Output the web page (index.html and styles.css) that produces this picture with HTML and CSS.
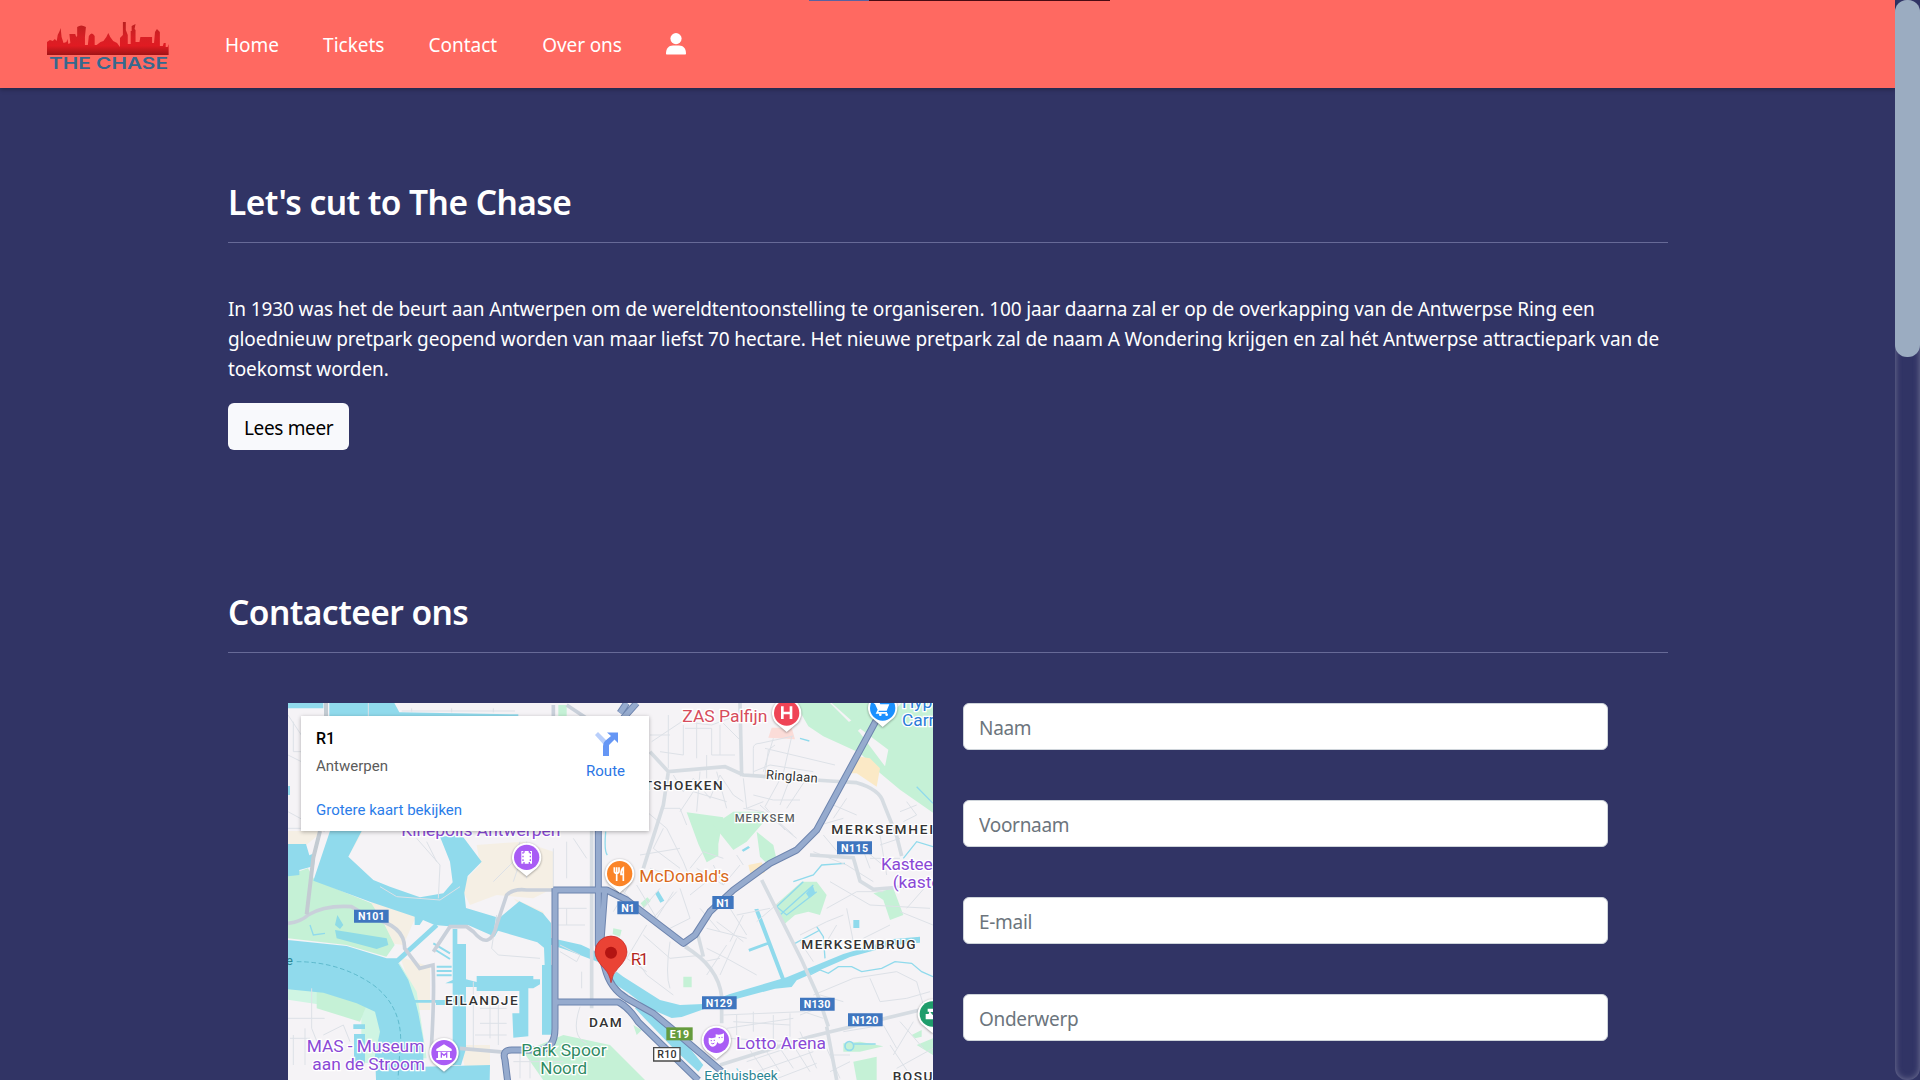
FILE: index.html
```html
<!DOCTYPE html>
<html lang="nl">
<head>
<meta charset="utf-8">
<title>The Chase</title>
<link rel="stylesheet" href="styles.css">
</head>
<body>
<header class="navbar">
  <a class="brand" aria-label="The Chase">
    <svg class="logo" viewBox="0 0 122 50" width="122" height="50">
      <defs><linearGradient id="sky" x1="0" y1="0" x2="0" y2="1"><stop offset="0" stop-color="#b9201f"/><stop offset=".45" stop-color="#d81f25"/><stop offset=".72" stop-color="#e01b22"/><stop offset="1" stop-color="#a01316"/></linearGradient></defs>
      <path transform="scale(.973 1)" fill="url(#sky)" d="M0 34V21l3-2 3 1 2-2 2 2 1-6 2-4 1-3 1 9 2 6 3-1 1-3 1 5 2-1-1-9h6l1 3 1-1V6q4-3 9 0l-1 10v8h3l1-9q3-5 6 0v9h2l4-3 3-1 3-4 2-4 2 4 3 4 4 2 3 4v-9l3-3V1h3v8l2 5v9h3V10h1V5l4-2-1 5 1 1v12h4l1-5h12v6h2l1-11 2-3 3 3v14h3l1-3h2v4h2l1-3V34z"/>
      <text class="logo-text" x="2" y="48" textLength="119" lengthAdjust="spacingAndGlyphs">THE CHASE</text>
    </svg>
  </a>
  <nav class="nav-links">
    <a>Home</a><a>Tickets</a><a>Contact</a><a class="about">Over ons</a>
    <a class="user" aria-label="Account"><svg viewBox="0 0 20 22" width="20" height="22"><ellipse cx="10" cy="5.600" rx="5.600" ry="5.600" fill="#fff"/><path fill="#fff" d="M1 21.500c-.6 0-1-.4-1-1 0-5 2.500-8 7-8h6c4.500 0 7 3 7 8 0 .6-.4 1-1 1z"/></svg></a>
  </nav>
  <div class="loader"><div class="loader-bar"></div></div>
</header>
<main class="container">
  <section class="intro">
    <h2>Let's cut to The Chase</h2>
    <hr>
    <p>In 1930 was het de beurt aan Antwerpen om de wereldtentoonstelling te organiseren. 100 jaar daarna zal er op de overkapping van de Antwerpse Ring een<br>gloednieuw pretpark geopend worden van maar liefst 70 hectare. Het nieuwe pretpark zal de naam A Wondering krijgen en zal hét Antwerpse attractiepark van de<br>toekomst worden.</p>
    <a class="btn">Lees meer</a>
  </section>
  <section class="contact">
    <h2>Contacteer ons</h2>
    <hr>
    <div class="row">
      <div class="map">
        <svg viewBox="24 24 1935 1131" width="645" height="377">
          <rect x="24" y="24" width="1935" height="1131" fill="#f5f3f6"/>
          <!-- built-up and industrial areas -->
          <g fill="#f5efe4">
            <path d="M24 408h105l-60 50-45-10zM245 408l-40 77 40-70zM590 450l140-10 90 30v110l-60 30-110-10-80 30-30-60 60-60z"/>
            <path d="M270 615l140 45-40 90-40-5zM360 785l90 30 0 130-35 0-30-90zM540 1050h90v70h-75zM700 610l90 40 10 30-80-50z"/>
          </g>
          <!-- parks -->
          <g fill="#c5f1d6">
            <path d="M24 540l60-20 20 35 170 70 35 55 35 70-25 35-120-35-175-20z"/>
            <path d="M24 863l100 6 105 35 55 30 20 70-15 100-35 0-10-80 0-60-90-30-134-20z" fill="#cff5e3"/>
            <path d="M110 880l150 50-20 50-130-40z"/>
            <path d="M350 790l60 100 30 200-15 0-20-150z" fill="#cff5e3"/>
            <path d="M835 30h25v33h-25z"/>
            <path d="M1545 24h105l90 90 75 100 10-50-80-60-90-80h120l60 30 30-30h95v330l-100-70-60-50-60-60-110-50-45-30z"/>
            <path d="M1700 85l50-30 10 30-35 30z"/>
            <path d="M1220 352l110 15-15 80 0 35-35 20-25-55z"/>
            <path d="M1300 390l60-40 90 0 20 10-70 80-40 25zM1430 410l50 40 10 45-20 20-30-30z"/>
            <path d="M1480 635l85-75 45 0 30 40-20 60-35-10-40 10-35 30zM1780 595l60-15 30 80-40 15-20-60z"/>
            <path d="M1082 625l20-18 10 10-20 22zM1000 700l25 5-5 20-22-8zM1210 845h25v32h-25z"/>
            <path d="M730 1070l120-50 140 30 60 60 60 60H800z"/>
            <path d="M1690 1045l50-5 70 14-70 16-50 0zM1720 1100l70-15v70h-60zM1895 1020l30-15v20l-20 5zM1910 1050l49-20v50z"/>
            <path d="M1060 990l25 15-15 15z"/>
          </g>
          <path d="M1465 128l10-30h60l10 35z" fill="#fbdcd8"/>
          <path d="M1710 235l30-50 30 5 30 30-10 55-30-20-30-20zM1405 510l40-8 10 30-40 20z" fill="#fbe9c6"/>
          <!-- river, docks and canals -->
          <g fill="#90daec">
            <path d="M24 24h106v16H24zM148 24h195l15 28 357 6v12H148z"/>
            <path d="M24 447h54l10 34 18-8-4 40-44 12v15l-34 4zM24 273h6v27h-6z"/>
            <path d="M150 408h95l-40 77 75 70 50 20 90 32 70-12 28-33-8-62-30-75 65-5 60 80-42 43-10 50 5 46 100 30 60-50 70 35 25 30v45l90 20 85 40v25l-130-50-45-15v60l7 3v207h-34V810h8l-2-52-20-16-118-35-10 18-80-35-40 5-60-5-35-15-10 15-15 0v-25L270 620l-170-63z"/>
            <path d="M24 735l176 18 120 37 30 0 115-105 10 10-120 110 30 50 20 60 10 40 15 80 0 80 200-5-2 90H290l-5-120 15-70-15-60-55-25-100-32-106-10z"/>
            <path d="M165 705l155 25 5 20-35 12-120-32zM172 660l18 30-10 12-15-12z" fill="#8fdbe6"/>
            <path d="M518 702h14v45h26v106l32 8v-18h170v10l20 0v15l-20 12h-15v144l-45 4-3-73h21v-67H590v-12l-32 0v185l-15 50h-25V930h-50v-12h50V865h-22l22-10z"/>
            <path d="M405 915h110v8H405zM220 988h35v14h-35zM222 1017h33v100h-33z"/>
            <path d="M1010 830l20 15 110 70 60 15 70-3 80-30 170-50 170-70 150-45 80-7v18l-80 8-130 35-160 70-15 20-50 5-150 40-60 20-70 25-30 3-70-30-60-45-60-40z"/>
            <path d="M1065 940l25-20 100 90 80 100-15 20-70-65z"/>
            <path d="M1423 643l12-2 80 210-12 2zM1405 762l60-22 3 8-60 22zM1720 675l18 0v24h-18zM1385 465l20-12 5 5-20 12zM1578 595l20-25 8 25-18 15zM1125 595l10-8 18 30-12 6z"/>
          </g>
          <g fill="none" stroke="#90daec" stroke-width="6">
            <path d="M460 745l50 30M462 762l48 30M470 815h45M470 828h45M470 841h45"/>
            <path d="M1590 840l30-15 25 10 30-20h40l30 15 60-10 40-20 50 5 30 25 34 15" stroke-width="4"/>
            <path d="M1490 635l80-75M1500 660l100-90M1490 635l30 25 90-70M1610 695l20 30 5 65M1545 745l75-40" stroke-width="4"/>
            <path d="M1540 560l60-20 25-30 70-5M1870 490l40-50 49 15M1910 275l49 50M1560 130l28 8M90 690l10 30 35-5M977 410q-5 60 5 70" stroke-width="4"/>
            <circle cx="1708" cy="1053" r="13" stroke-width="5"/><path d="M1722 1047h65M1370 1120l30 40" stroke-width="4"/>
          </g>
          <path d="M50 800q130 0 230 70 80 60 82 160l-8 120" fill="none" stroke="#46a9bd" stroke-width="2" stroke-dasharray="14 8"/>
          <!-- local streets -->
          <g fill="none" stroke="#dde1e7" stroke-width="3">
            <path d="M24 60l40 60M40 80v90h24M24 180l40 20M24 350l110 60M24 400h38M265 24v40M365 48h340M395 40v10M515 40v12M640 40v12"/>
            <path d="M410 430l70 80-5 100M440 440l30 60M700 560l20-60M820 580V460M860 440v110M740 440v110M640 560l60-60 20-60M880 430l40 60M300 575l50 30 130 10 60-40"/>
            <path d="M830 640h90M835 690h80M860 640v50M840 770l50 30 10-20-60-30M580 860v200M630 900v130M655 900v150M600 940h80M600 985h80M585 1020h95M650 660l-15 100 20 20 125 10"/>
            <path d="M30 1030h60M40 1020v90M75 1000v110M95 880v120l20 50M130 1020l60-30 20 50M24 970h110M900 935q-30 90 20 110M905 830v50M700 1100h150M720 1070v80M750 1090v60M780 1080v50"/>
            <path d="M1115 140l90-60 90 10 80-30M1140 170l70 10v-90M1165 60v160M1215 100h80v80h70M1250 80v110M1280 180v70M1320 90v90M1110 120h60M1325 80l60 60"/>
            <path d="M1180 240l30 50 30-40 50 60 30-70 40 60 30 20M1260 230l-10 120M1310 230l30 110M1390 250l10 90 50-20M1200 350l40-60 100 30M1150 340l50 0 20 50"/>
            <path d="M1420 240l0-80q0-15 20-15l100-22M1420 230l50-20 130 20M1455 240l10-75 20-15M1455 160l210 50M1535 125l-25 110-55 100 60 70M1420 300l60 15 80 0M1390 340l60 10 100 80M1440 330l100 90M1530 250l-30 80M1580 250l-60 90M1480 130l-30 100"/>
            <path d="M1100 350l60 50 50 100 20 50M1150 400l-30 60 80 60M1080 480l120-20M1110 520l90 30M1230 520l40-50 60 20M1250 520l80 50 50-60M1300 510l30 60M1600 470l100 40 80 50M1370 480l20 30"/>
            <path d="M1620 390l70-20M1630 420l50 60M1740 440l30 80M1800 420l20 120M1770 490h90M1800 450l60-20M1760 470l60 50M1700 310l-40 60M1660 330l70 30M1860 350l50-20M1870 380l40-20-30-40"/>
            <path d="M1070 570l60 100 50-80M1020 580l60 60M1080 650l60-70M1110 680l80-90M1200 580l30 90-60 30M1230 600l50-40M1260 640l60 70M1300 650l-60 70M1170 740q-15 100 0 140M1090 720l80 70 100-10M1100 690l-60 100 60 40"/>
            <path d="M1210 740l60 60 50-10M1280 700l120 30M1310 680l80 60M1350 640l50 80M1370 660l100-20M1280 760l60 30 90 50M1340 750l-60 90M1370 730l-50 110M1390 660l-40 80M1430 680l70-60"/>
            <path d="M1000 650l60-100M1060 780l40 60 80 60M1650 560l120 70 180 10M1640 640l90-50 80 0M1640 740l30-50M1700 640l20 100M1560 720l80-40 50-20M1600 800l-40-60M1750 730l80-40M1860 650l99 40M1880 640l70-80"/>
            <path d="M1600 900l120-50 130-20 60 30 20 70M1770 850l30 70M1800 920l80-10 70-20M1620 900l70 20M1560 960l80-30M1330 960l240-10 60 20M1340 1000l200-30M1370 960v60M1420 950v60M1480 960v70M1530 955v70M1360 980l170 10M1340 1030l190 10"/>
            <path d="M1400 1050l60 90M1440 1040l60 90M1480 1030l60 90M1520 1020l70 110M1560 1010l50 110M1400 1100l180-60M1430 1130l170-60M1480 1155l130-50M1640 1060l40 90M1660 1080h50M1650 1130l60-30M1690 1010l120-20 40 70M1830 1050l60 90M1900 980l-60 100M1850 1120l109-60M1860 980l70 80"/>
          </g>
          <!-- secondary roads -->
          <g fill="none" stroke="#d6dce2" stroke-width="11">
            <path d="M1380 24l5 220M1110 170l55 60 170-15 55 25 260 18 80 5q70 20 80 60l40 100 15 60M1165 230l-15 100-60 190"/>
            <path d="M1445 555l120 240 50 110 30 90M1250 705l20 80M1215 755q100 60 110 150v80M1320 1110l270-85 370-90M1640 995l30 160M1590 480l130 8 20 70 40 25 120-10M935 400v540"/>
            <path d="M24 685q40-5 60-25 50-30 130-25l60 35q100 20 100 90l45 60 40-10q5 80-5 250M460 770l50-75h50l20 15q50 60 70-20l30-90q20-20 60-15h100M820 30v60M540 1060l140 12M860 30l60 40" stroke="#c9d0da"/>
          </g>
          <path d="M138 24v40M120 408l-20 80-20 170" fill="none" stroke="#c3cbd2" stroke-width="12"/>
          <!-- motorways: dark casing under a lighter carriageway -->
          <g fill="none" stroke="#6d84ae" stroke-width="21" stroke-linejoin="round">
            <path d="M955 400v350l20 70q15 60 65 90l80 45 60 50 210 180M974 590l-12 160"/>
            <path d="M820 585h160l60 30 170 130 35-25 45-70 70-65 110-80 80-40 60-60 190-350"/>
            <path d="M825 580v420q0 65-50 65h-80q-30 0-20 30l10 80M825 921h190q30 15 60 60l180 175"/>
            <path d="M1070 24l-40 45M1040 24l-20 30"/>
          </g>
          <g fill="none" stroke="#96abce" stroke-width="15" stroke-linejoin="round">
            <path d="M955 400v350l20 70q15 60 65 90l80 45 60 50 210 180M974 590l-12 160"/>
            <path d="M820 585h160l60 30 170 130 35-25 45-70 70-65 110-80 80-40 60-60 190-350"/>
            <path d="M825 580v420q0 65-50 65h-80q-30 0-20 30l10 80M825 921h190q30 15 60 60l180 175"/>
            <path d="M1070 24l-40 45M1040 24l-20 30"/>
          </g>
          <!-- road shields -->
          <g class="shield">
            <path fill="#3f76bf" d="M222 644h104v39H222zM1671 439h105v39h-105zM1012 619h64v39h-64zM1297 603h64v39h-64zM1266 904h104v39h-104zM1560 908h104v39h-104zM1704 955h104v39h-104z"/>
            <path fill="#659b3d" d="M1159 997h79v39h-79z"/><path fill="#fff" stroke="#4a4a4a" stroke-width="4" d="M1121 1058h79v40h-79z"/>
            <text x="234" y="676" textLength="80">N101</text><text x="1683" y="471" textLength="81">N115</text><text x="1024" y="651" textLength="40">N1</text><text x="1309" y="635" textLength="40">N1</text><text x="1277" y="935" textLength="80">N129</text><text x="1571" y="940" textLength="80">N130</text><text x="1715" y="987" textLength="80">N120</text><text x="1169" y="1028" textLength="58">E19</text>
            <text class="r10" x="1132" y="1090" textLength="58">R10</text>
          </g>
          <!-- place names -->
          <g class="district">
            <text x="1091" y="285" textLength="240">TSHOEKEN</text><text x="1654" y="417" textLength="308">MERKSEMHEI</text><text x="1564" y="762" textLength="346">MERKSEMBRUG</text><text x="495" y="931" textLength="221">EILANDJE</text><text x="927" y="997" textLength="101">DAM</text><text x="1838" y="1157" textLength="122">BOSU</text>
            <text class="sub" x="1364" y="381" textLength="183">MERKSEM</text>
            <text class="street" x="1457" y="252" textLength="156" transform="rotate(4 1457 252)">Ringlaan</text>
          </g>
          <g class="poi">
            <text fill="#8a49d6" x="364" y="423" textLength="477" lengthAdjust="spacingAndGlyphs">Kinepolis Antwerpen</text>
            <text fill="#d64c5c" x="1207" y="80" textLength="255" lengthAdjust="spacingAndGlyphs">ZAS Palfijn</text>
            <text fill="#2a7bd8" x="1866" y="40">Hyp</text><text fill="#2a7bd8" x="1866" y="92">Carr</text>
            <text fill="#d9691c" x="1078" y="562" textLength="270" lengthAdjust="spacingAndGlyphs">McDonald's</text>
            <text fill="#8a49d6" x="1803" y="524" textLength="155">Kastee</text><text fill="#8a49d6" x="1838" y="578">(kaste</text>
            <text fill="#b3261e" x="1052" y="810" textLength="54">R1</text>
            <text fill="#8a49d6" x="80" y="1071" textLength="353" lengthAdjust="spacingAndGlyphs">MAS - Museum</text><text fill="#8a49d6" x="97" y="1124" textLength="338" lengthAdjust="spacingAndGlyphs">aan de Stroom</text>
            <text fill="#2f8a63" x="724" y="1084" textLength="256" lengthAdjust="spacingAndGlyphs">Park Spoor</text><text fill="#2f8a63" x="781" y="1137" textLength="140" lengthAdjust="spacingAndGlyphs">Noord</text>
            <text fill="#8a49d6" x="1368" y="1062" textLength="270" lengthAdjust="spacingAndGlyphs">Lotto Arena</text>
            <text fill="#2b8593" class="creek" x="1273" y="1156" textLength="220" lengthAdjust="spacingAndGlyphs">Eethuisbeek</text>
            <text fill="#2b8593" class="creek ferry" x="18" y="811">e</text>
          </g>
          <!-- pins -->
          <g class="pins">
            <g transform="translate(740 487)"><path class="pin" d="M0 57l-24-20A44 44 0 1 1 24 37z"/><circle r="38" fill="#a95cf5"/><path fill="#fff" d="M-16-19h6v5h4v-5H6v5h4v-5h6v38h-6v-5H6v5H-6v-5h-4v5h-6z"/><path stroke="#a95cf5" stroke-width="4" stroke-dasharray="5 6" d="M-11-16v34M11-16v34"/></g>
            <g transform="translate(1520 54)"><path class="pin" d="M0 57l-24-20A44 44 0 1 1 24 37z"/><circle r="38" fill="#ef4456"/><path stroke="#fff" stroke-width="8" fill="none" d="M-13-20v38M13-20v38M-13 0h26"/></g>
            <g transform="translate(1808 39)"><path class="pin" d="M0 57l-24-20A44 44 0 1 1 24 37z"/><circle r="38" fill="#1a90ff"/><path fill="#fff" d="M-20-17h10l3 6h27l-8 19h-23l-2 4h26v5h-34l6-12-8-17h-5z"/><circle cx="-7" cy="20" r="4" fill="#fff"/><circle cx="12" cy="20" r="4" fill="#fff"/></g>
            <g transform="translate(1019 536)"><path class="pin" d="M0 57l-24-20A44 44 0 1 1 24 37z"/><circle r="38" fill="#fb8427"/><path stroke="#fff" stroke-width="5" fill="none" d="M-16-19v12q0 6 7 6t7-6v-12M-9-19v41M11 22V-18q-7 4-7 20h7"/></g>
            <g transform="translate(492 1073)"><path class="pin" d="M0 57l-24-20A44 44 0 1 1 24 37z"/><circle r="38" fill="#a95cf5"/><path fill="#fff" d="M0-25l23 14v6h-46v-6zM-18-3h36v19h5v6h-46v-6h5z"/><path stroke="#a95cf5" stroke-width="4" fill="none" d="M-8 15V1L0 8 8 1v14"/></g>
            <g transform="translate(1309 1036)"><path class="pin" d="M0 57l-24-20A44 44 0 1 1 24 37z"/><circle r="38" fill="#a95cf5"/><path fill="#fff" d="M-2-18q13 4 25-3v20q-3 10-12 11-6 0-9-6V-8h-4zM-23-8q12 4 25-3v19q-3 10-12 11-10 0-13-12z"/><path stroke="#a95cf5" stroke-width="3" fill="none" d="M7-8h4M15-9h4M-17 1h4M-8 0h4M-15 9q5 4 9-1"/></g>
            <g transform="translate(1957 957)"><path class="pin" d="M0 57l-24-20A44 44 0 1 1 24 37z"/><circle r="38" fill="#1f9d6b"/><path fill="#fff" d="M-14-16H8v10H-6l6 8h10v14H-20V0h9l2-7h-5z"/></g>
            <path d="M993 863q-4-26-20-42-28-28-28-50a48 48 0 1 1 96 0q0 22-28 50-16 16-20 42z" fill="#ea4335" stroke="#c5221f" stroke-width="2"/><circle cx="993" cy="773" r="18" fill="#b31412"/>
          </g>
        </svg>
        <div class="place-card">
          <div class="place-info"><div class="place-name">R1</div><div class="place-city">Antwerpen</div><a class="place-link">Grotere kaart bekijken</a></div>
          <div class="route"><svg viewBox="0 0 24 24" width="24" height="24"><path d="M1 3l3-3 9 9-3 4z" fill="#b9cffb"/><path d="M9 24V14q0-3 2-5l6-5-4-3.500h11V11l-3.500-3.500L15 13v11z" fill="#6596f5"/></svg><span>Route</span></div>
        </div>
      </div>
      <form class="form">
        <input type="text" placeholder="Naam"><input type="text" placeholder="Voornaam"><input type="text" placeholder="E-mail"><input type="text" placeholder="Onderwerp">
      </form>
    </div>
  </section>
</main>
<div class="scroll-track"><div class="scroll-thumb"></div></div>
</body>
</html>
```
FILE: styles.css
```css
* { box-sizing: border-box; }
html, body { height: 100%; overflow: hidden; }
body {
  margin: 0;
  background: #313465;
  color: #fff;
  font: 19px/30px "Noto Sans", "Open Sans", sans-serif;
}
.navbar {
  position: relative;
  display: flex;
  align-items: center;
  height: 88px;
  margin-right: 25px;
  padding-left: 47px;
  background: #ff6961;
  box-shadow: 0 2px 4px rgba(0, 0, 0, .25);
}
.brand, .logo { display: block; overflow: visible; }
.brand { margin-top: 3px; }
.logo-text { font: 600 16.5px Inter, sans-serif; fill: #35698f; }
.nav-links {
  display: flex;
  align-items: center;
  gap: 44px;
  margin: 2px 0 0 56px;
}
.about { margin-left: 1px; letter-spacing: -.1px; }
.user { display: flex; margin-top: -2px; }
.loader {
  position: absolute;
  left: 809px;
  top: 0;
  width: 301px;
  height: 1px;
  background: #4a0a12;
}
.loader-bar { width: 60px; height: 1px; background: #5a62a0; }
.container { width: 1440px; margin-left: 228px; }
.intro { height: 410px; padding-top: 91px; }
.contact { padding-top: 91px; }
h2 {
  margin: 0;
  font-size: 33.5px;
  font-weight: 600;
  line-height: 46px;
  letter-spacing: -.55px;
}
hr {
  height: 1px;
  margin: 17px 0 50px;
  border: 0;
  background: #676a97;
}
p {
  margin: 51px 0 19px;
  letter-spacing: -.117px;
  white-space: nowrap;
}
.btn {
  display: inline-block;
  height: 47px;
  padding: 10px 16px 0;
  border-radius: 6px;
  background: #f8f9fc;
  color: #000;
  letter-spacing: -.35px;
}
.row { display: flex; gap: 30px; padding: 0 60px; }
.map {
  position: relative;
  flex: 1;
  height: 377px;
  overflow: hidden;
}
.map > svg { display: block; }
.map text { font-family: Roboto, sans-serif; }
.shield text { font-size: 32px; font-weight: 700; fill: #fff; }
.shield .r10 { font-weight: 500; fill: #333; }
.district text {
  font-size: 41px;
  font-weight: 500;
  fill: #333;
  stroke: #fff;
  stroke-width: 7px;
  paint-order: stroke;
  letter-spacing: 3px;
}
.district .sub { font-size: 34px; fill: #5c5f63; }
.district .street { font-size: 39px; font-weight: 400; letter-spacing: 0; }
.poi text {
  font-size: 52px;
  stroke: #fff;
  stroke-width: 8px;
  paint-order: stroke;
}
.poi .creek { font-size: 39px; }
.poi .ferry { stroke: none; }
.pin { fill: #fff; filter: drop-shadow(0 2px 3px rgba(0, 0, 0, .4)); }
.place-card {
  position: absolute;
  left: 13px;
  top: 13px;
  display: flex;
  justify-content: space-between;
  width: 348px;
  height: 115px;
  padding: 12px 24px 0 15px;
  background: #fff;
  box-shadow: 0 1px 4px rgba(0, 0, 0, .3);
  font: 15px/22px Roboto, sans-serif;
}
.place-name { color: #000; font-size: 16px; font-weight: 500; }
.place-city { margin-top: 5px; color: #5b5b5b; }
.place-link { display: block; margin-top: 22px; color: #2b7de9; }
.route {
  display: flex;
  flex-direction: column;
  align-items: center;
  gap: 4px;
  padding-top: 4px;
  color: #2b76e5;
}
.form { display: flex; flex: 1; flex-direction: column; gap: 50px; }
input {
  width: 100%;
  height: 47px;
  padding: 2px 15px 0;
  border: 1px solid #ced4da;
  border-radius: 6px;
  background: #fff;
  font: inherit;
  letter-spacing: -.3px;
}
input::placeholder { color: #6c757d; opacity: 1; }
.scroll-track {
  position: absolute;
  right: 0;
  top: 0;
  width: 25px;
  height: 1080px;
  border-radius: 12px;
  box-shadow: inset 0 0 6px #77789a;
}
.scroll-thumb { height: 357px; border-radius: 12px; background: #9bacc1; }
```
